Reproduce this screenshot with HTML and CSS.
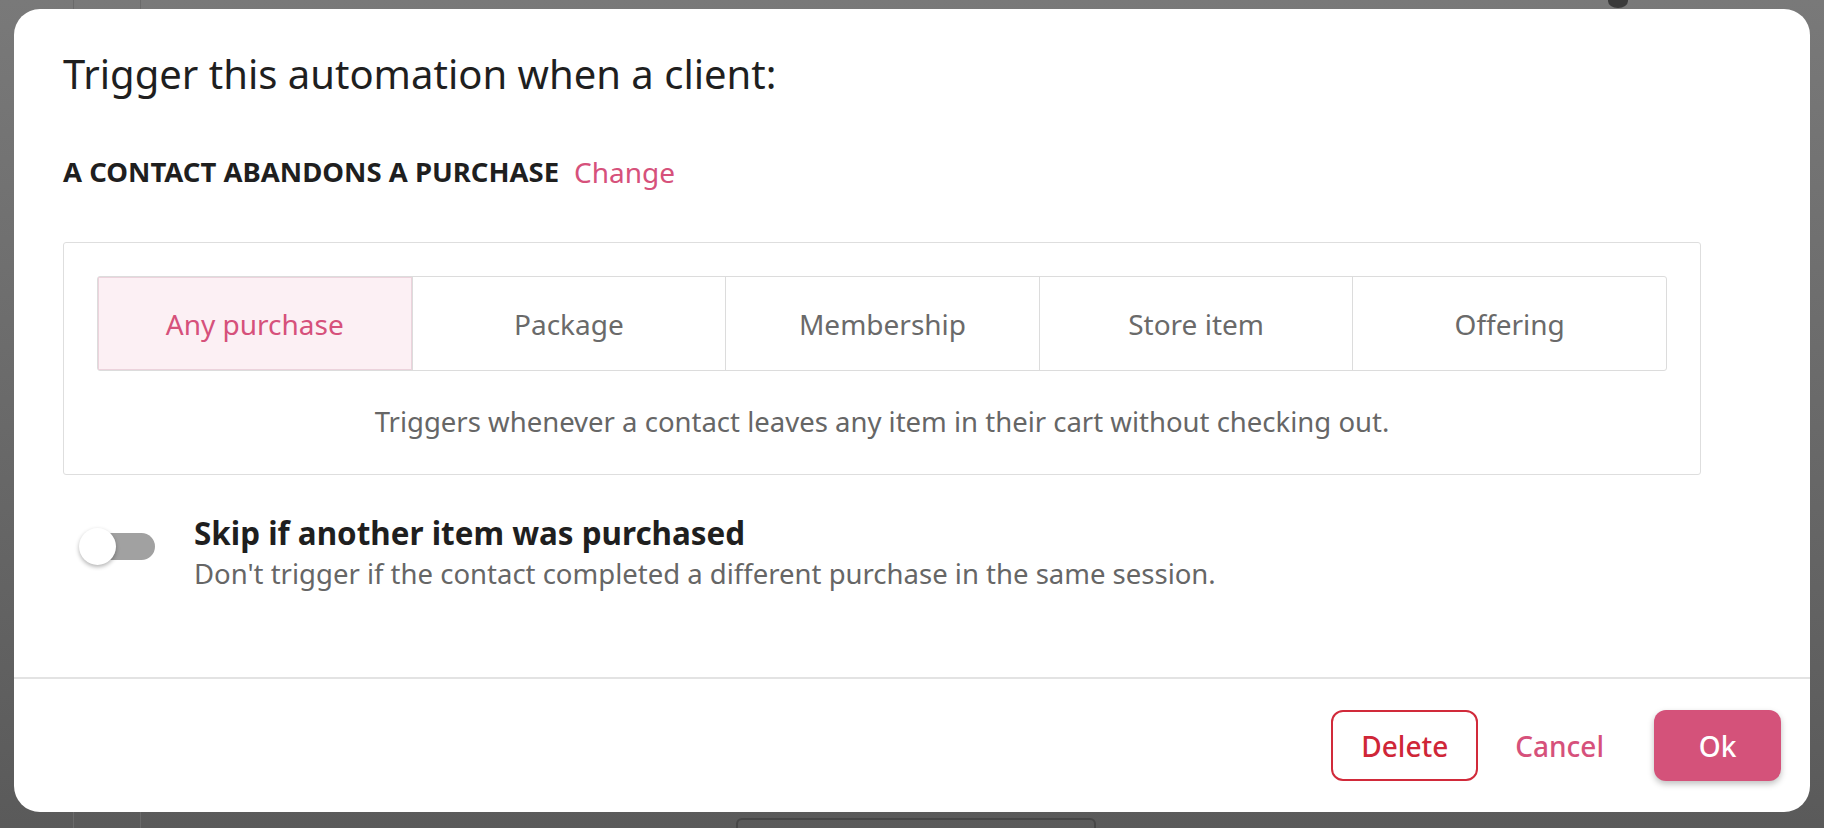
FILE: index.html
```html
<!DOCTYPE html>
<html>
<head lang="en">
    <meta charset="UTF-8">
    <title>Trigger automation</title>
    <link rel="stylesheet" href="styles.css">
</head>
<body>
<div class="backdrop">
    <div class="backdrop_nav"></div>
    <div class="backdrop_dot"></div>
    <div class="backdrop_box"></div>
</div>
<div class="modal">
    <div class="modal_body">
        <h1 class="modal_title">Trigger this automation when a client:</h1>
        <div class="trigger_row">
            <span class="trigger_name">A contact abandons a purchase</span>
            <a href="#" class="link">Change</a>
        </div>
        <div class="card">
            <ul class="segments">
                <li class="active">Any purchase</li>
                <li>Package</li>
                <li>Membership</li>
                <li>Store item</li>
                <li>Offering</li>
            </ul>
            <p class="card_hint">Triggers whenever a contact leaves any item in their cart without checking out.</p>
        </div>
        <div class="option">
            <span class="toggle"><span class="toggle_knob"></span></span>
            <div class="option_text">
                <div class="option_title">Skip if another item was purchased</div>
                <div class="option_hint">Don't trigger if the contact completed a different purchase in the same session.</div>
            </div>
        </div>
    </div>
    <div class="modal_footer">
        <button class="btn btn_delete">Delete</button>
        <button class="btn btn_cancel">Cancel</button>
        <button class="btn btn_ok">Ok</button>
    </div>
</div>
</body>
</html>
```
FILE: styles.css
```css
html, body {
    margin: 0;
    height: 100%;
}
body {
    font-family: "Noto Sans", "Open Sans", sans-serif;
    background: linear-gradient(#797979, #5a5a5a);
    overflow: hidden;
    color: #222;
}
a {
    text-decoration: none;
}

/* page behind the overlay */
.backdrop {
    position: absolute;
    inset: 0;
}
.backdrop_nav {
    position: absolute;
    left: 73px;
    top: 0;
    width: 66px;
    height: 100%;
    border-left: 1px solid #6a6a6a;
    border-right: 1px solid #6a6a6a;
}
.backdrop_dot {
    position: absolute;
    left: 1608px;
    top: -6px;
    width: 20px;
    height: 14px;
    border-radius: 50%;
    background: #3a3a3a;
}
.backdrop_box {
    position: absolute;
    left: 736px;
    top: 818px;
    width: 356px;
    height: 40px;
    border: 2px solid #474747;
    border-radius: 6px;
}

/* modal */
.modal {
    position: absolute;
    left: 14px;
    top: 9px;
    width: 1796px;
    height: 803px;
    background: #fff;
    border-radius: 26px;
    display: flex;
    flex-direction: column;
    overflow: hidden;
}
.modal_body {
    flex: 1;
    padding: 38px 49px 0;
}
.modal_title {
    margin: 0;
    font-size: 40px;
    line-height: 54px;
    font-weight: 400;
    color: #1f1f1f;
}
.trigger_row {
    margin-top: 52px;
    line-height: 38px;
    display: flex;
    align-items: center;
    gap: 15px;
}
.trigger_name {
    font-size: 27.5px;
    font-weight: 700;
    text-transform: uppercase;
    color: #1f1f1f;
}
.link {
    font-size: 28px;
    color: #d6517b;
}

.card {
    width: 1638px;
    box-sizing: border-box;
    margin-top: 51px;
    border: 1px solid #dedede;
    border-radius: 3px;
    padding: 33px 33px 34px;
}
.segments {
    list-style: none;
    margin: 0;
    padding: 0;
    display: grid;
    grid-template-columns: repeat(5, 1fr);
    border: 1px solid #dcdcdc;
    border-radius: 3px;
}
.segments li {
    height: 93px;
    display: flex;
    align-items: center;
    justify-content: center;
    font-size: 28px;
    color: #6a6a6a;
    border-left: 1px solid #dcdcdc;
}
.segments li:first-child {
    border-left: none;
}
.segments li.active {
    background: #fcf0f4;
    color: #d6517b;
    box-shadow: inset 0 0 0 1px #ecd3dc;
}
.card_hint {
    margin: 33px 0 0;
    text-align: center;
    font-size: 27.5px;
    line-height: 36px;
    color: #666;
}

.option {
    margin-top: 37px;
    display: flex;
    align-items: flex-start;
    gap: 39px;
    padding-left: 16px;
}
.toggle {
    position: relative;
    margin-top: 16px;
    width: 76px;
    height: 37px;
    flex-shrink: 0;
}
.toggle::before {
    content: "";
    position: absolute;
    left: 14px;
    top: 5px;
    width: 62px;
    height: 27px;
    border-radius: 14px;
    background: #a1a1a1;
}
.toggle_knob {
    position: absolute;
    left: 0;
    top: 0;
    width: 37px;
    height: 37px;
    border-radius: 50%;
    background: #fff;
    box-shadow: 0 2px 4px rgba(0, 0, 0, 0.3);
}
.option_title {
    font-size: 31.4px;
    font-weight: 700;
    line-height: 42px;
    color: #1f1f1f;
}
.option_hint {
    font-size: 27.5px;
    line-height: 40px;
    color: #666;
}

.modal_footer {
    height: 133px;
    border-top: 2px solid #e3e3e3;
    display: flex;
    align-items: center;
    justify-content: flex-end;
    padding-right: 29px;
}
.btn {
    font-family: "Noto Sans", "Open Sans", sans-serif;
    font-size: 28px;
    font-weight: 500;
    height: 71px;
    border-radius: 12px;
    border: none;
    background: none;
    cursor: pointer;
}
.btn_delete {
    width: 147px;
    border: 2px solid #d12a3a;
    color: #cf2637;
}
.btn_cancel {
    color: #d6517b;
    padding: 0 24px;
    margin: 0 26px 0 13px;
}
.btn_ok {
    width: 127px;
    background: #d4527a;
    color: #fff;
    box-shadow: 0 3px 6px rgba(0, 0, 0, 0.25);
}
```
